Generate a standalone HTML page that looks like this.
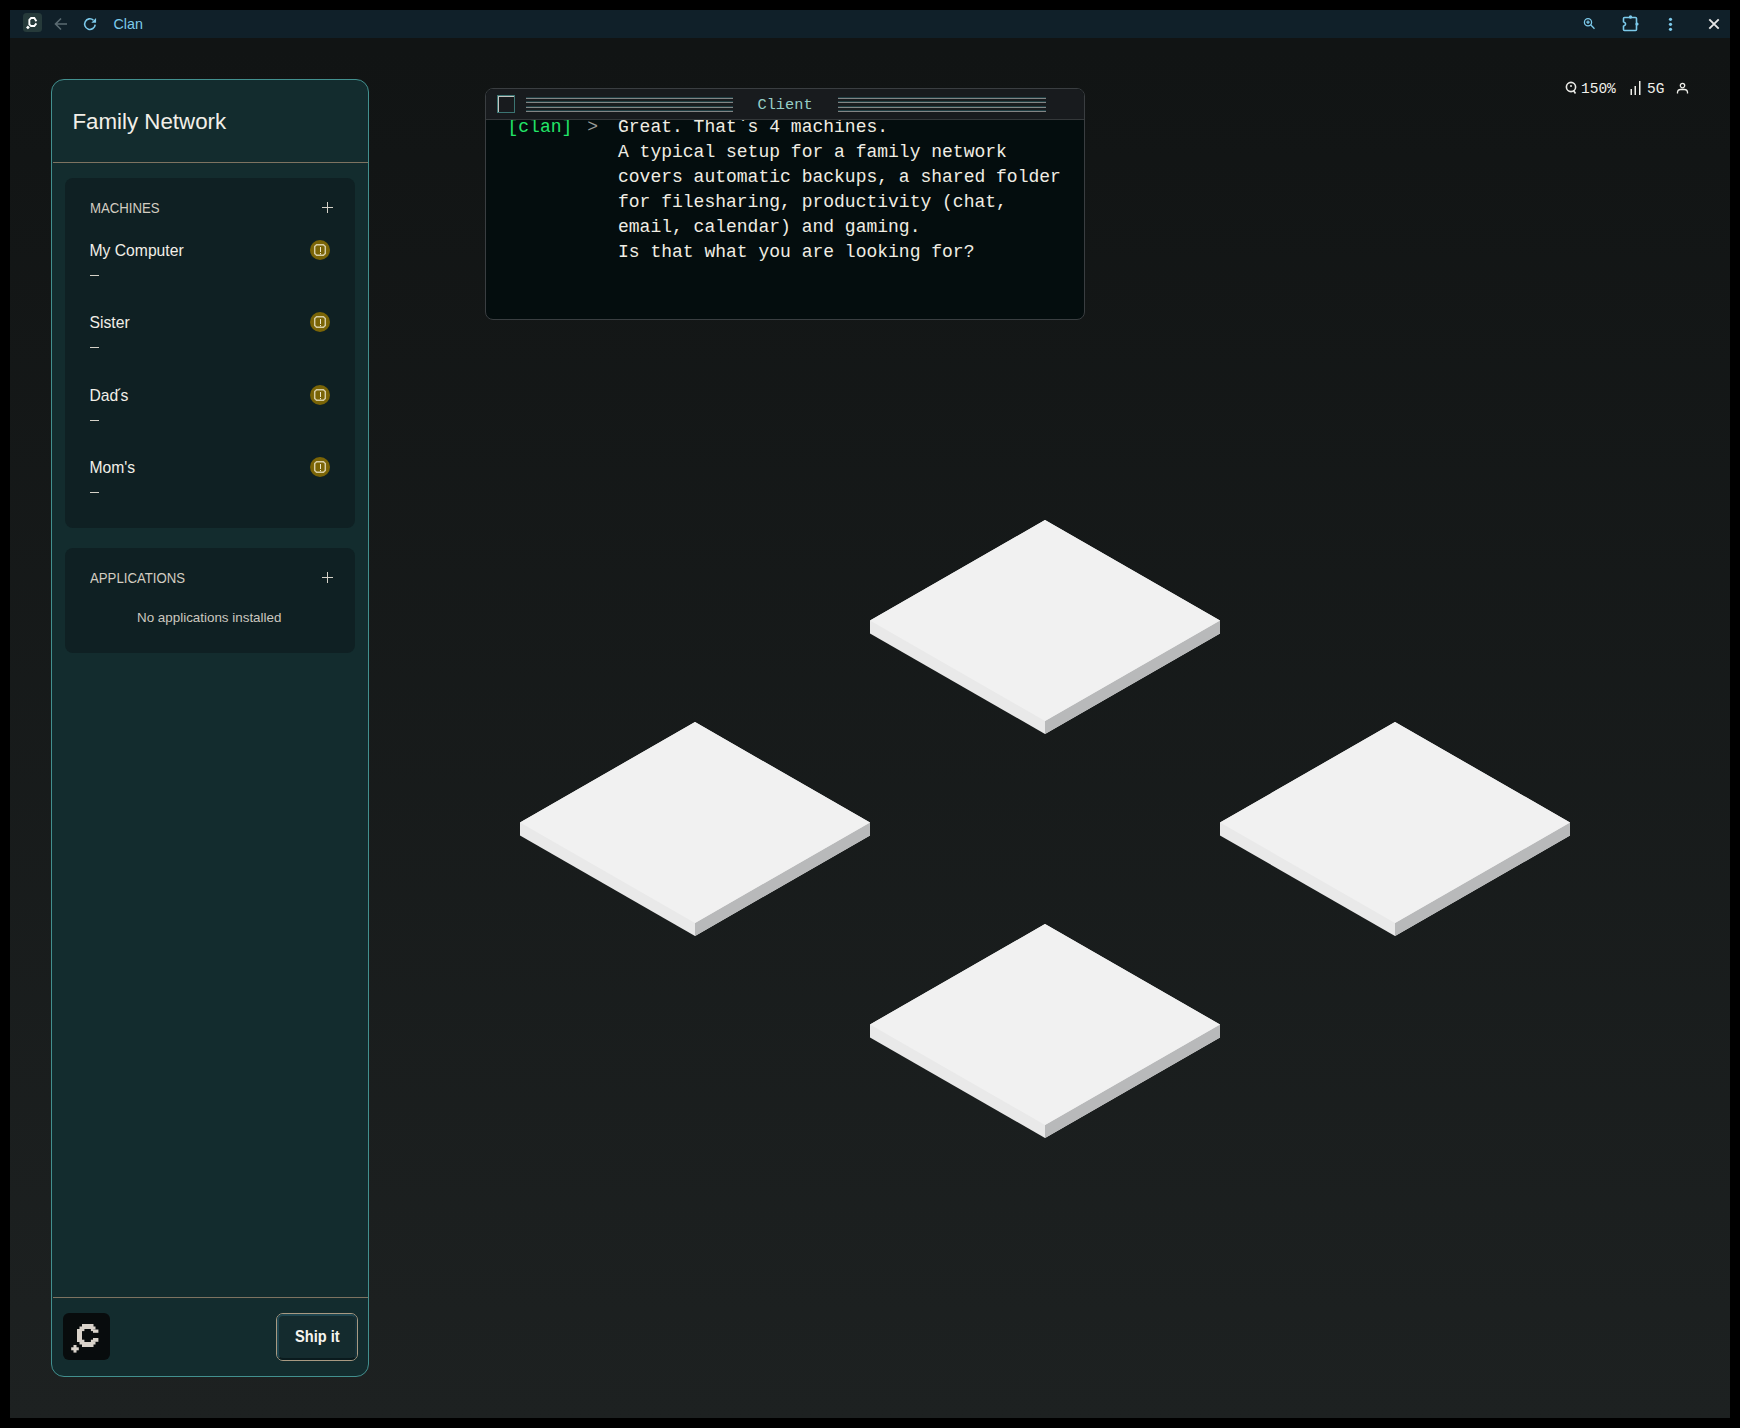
<!DOCTYPE html>
<html><head><meta charset="utf-8">
<style>
*{box-sizing:border-box;margin:0;padding:0}
html,body{width:1740px;height:1428px;overflow:hidden;background:#000;font-family:"Liberation Sans",sans-serif}
#win{position:absolute;left:10px;top:10px;width:1720px;height:1408px;background:linear-gradient(to bottom,#111414 0,#111414 40px,#1d2121 100%)}
#tb{position:absolute;left:10px;top:10px;width:1720px;height:28px;background:#102029}
.t{position:absolute;white-space:pre;line-height:1}
#sb{position:absolute;left:51px;top:79px;width:318px;height:1298px;border:1px solid #42908f;border-radius:13px;background:#132c2e}
.div{position:absolute;left:53px;width:315px;height:1px;background:#7d7361}
.card{position:absolute;left:65px;width:290px;background:#0f2023;border-radius:8px}
.hdr{font-size:14.5px;color:#d3cdc1;transform:scaleX(0.91);transform-origin:0 0}
.plus{position:absolute;width:11px;height:11px}
.plus:before{content:"";position:absolute;left:5px;top:0;width:1px;height:11px;background:#d6d2c8}
.plus:after{content:"";position:absolute;left:0;top:5px;width:11px;height:1px;background:#d6d2c8}
.mname{font-size:15.7px;color:#f2efe8}
.dash{position:absolute;left:90px;width:9px;height:1px;background:#d6d2c8}
.warn{position:absolute;left:310px;width:20px;height:20px}
#term{position:absolute;left:485px;top:88px;width:600px;height:232px;border:1px solid #3a3e41;border-radius:8px;background:#040d0e;overflow:hidden}
#thead{position:absolute;left:0;top:0;width:598px;height:31px;background:#181b1e;border-bottom:1px solid #34383a;z-index:2}
.tl{position:absolute;font-family:"Liberation Mono",monospace;font-size:18px;line-height:25px;color:#f0ede4;white-space:pre}
.stripes{position:absolute;top:97px;height:17px;background:repeating-linear-gradient(to bottom,#1f3d42 0,#1f3d42 1px,#828484 1px,#828484 2px,#181b1e 2px,#181b1e 4.33px)}
.tile{position:absolute;width:352px;height:216px}
</style></head><body>
<div id="win"></div>
<div id="tb"></div>
<!-- titlebar icons -->
<svg style="position:absolute;left:23px;top:13px" width="19" height="19" viewBox="0 0 19 19">
  <rect x="0" y="0" width="19" height="19" rx="3.5" fill="#263a3a"/>
  <path d="M13.4 8.2L11.3 5.05H8.1L6.35 6.8V11.3L8.1 13.05H11.3L13.4 10.3" stroke="#ffffff" stroke-width="1.9" fill="none"/>
  <path d="M4.9 12.6L6.8 14.5L4.9 16.3L3 14.5Z" fill="#ffffff"/>
</svg>
<svg style="position:absolute;left:54px;top:17px" width="14" height="14" viewBox="0 0 14 14">
  <path d="M13 7H2M7 1.5L1.5 7L7 12.5" stroke="#5b6b72" stroke-width="1.6" fill="none"/>
</svg>
<svg style="position:absolute;left:83px;top:17px" width="14" height="14" viewBox="0 0 14 14">
  <path d="M12.2 7.6A5.3 5.3 0 1 1 10.4 3.1" stroke="#7ccaeb" stroke-width="1.55" fill="none"/>
  <path d="M13.05 1.1V5.85H8.3Z" fill="#7ccaeb"/>
</svg>
<div class="t" style="left:113.5px;top:17px;font-size:14.3px;color:#7ccaeb;">Clan</div>
<svg style="position:absolute;left:1583px;top:17px" width="14" height="14" viewBox="0 0 14 14">
  <circle cx="5" cy="5.2" r="3.6" stroke="#7ccaeb" stroke-width="1.3" fill="none"/>
  <path d="M3.3 5.2H6.7M5 3.5V6.9" stroke="#7ccaeb" stroke-width="1.2"/>
  <path d="M7.6 7.8L11.5 11.8" stroke="#7ccaeb" stroke-width="1.3"/>
</svg>
<svg style="position:absolute;left:1621px;top:14px" width="20" height="19" viewBox="0 0 20 19">
  <path d="M3.5 3.5H14.5A1 1 0 0 1 15.5 4.5V15.5A1 1 0 0 1 14.5 16.5H3.5A1 1 0 0 1 2.5 15.5V12.3Q6.8 10 2.5 7.7V4.5A1 1 0 0 1 3.5 3.5Z" stroke="#7ccaeb" stroke-width="1.6" fill="none"/>
  <circle cx="9.5" cy="3" r="1.7" fill="#7ccaeb"/>
  <circle cx="16" cy="10" r="1.6" fill="#7ccaeb"/>
</svg>
<svg style="position:absolute;left:1666px;top:17px" width="10" height="16" viewBox="0 0 10 16">
  <circle cx="4.5" cy="2.3" r="1.6" fill="#7ccaeb"/><circle cx="4.5" cy="7.3" r="1.6" fill="#7ccaeb"/><circle cx="4.5" cy="12.3" r="1.6" fill="#7ccaeb"/>
</svg>
<svg style="position:absolute;left:1707px;top:17px" width="14" height="14" viewBox="0 0 14 14">
  <path d="M2.3 2.3L11.7 11.7M11.7 2.3L2.3 11.7" stroke="#e6e6e6" stroke-width="1.9"/>
</svg>

<!-- sidebar -->
<div id="sb"></div>
<div class="t" style="left:72.5px;top:111px;font-size:22.3px;color:#f2efe8">Family Network</div>
<div class="div" style="top:162px"></div>
<div class="card" style="top:178px;height:350px"></div>
<div class="t hdr" style="left:90px;top:201px">MACHINES</div>
<div class="plus" style="left:322px;top:202px"></div>

<div class="t mname" style="left:89.5px;top:243px">My Computer</div>
<div class="dash" style="top:275px"></div>
<div class="t mname" style="left:89.5px;top:315px">Sister</div>
<div class="dash" style="top:347px"></div>
<div class="t mname" style="left:89.5px;top:388px">Dad<span style="margin-left:-1.5px;margin-right:-1.5px">&#180;</span>s</div>
<div class="dash" style="top:420px"></div>
<div class="t mname" style="left:89.5px;top:460px">Mom's</div>
<div class="dash" style="top:492px"></div>

<svg class="warn" style="top:240px" width="20" height="20" viewBox="0 0 20 20"><circle cx="10" cy="10" r="10" fill="#7a6406"/><path d="M6.6 4.7H13.4L15.3 6.6V13.4L13.4 15.3H6.6L4.7 13.4V6.6Z" stroke="#d6cda6" stroke-width="1.45" fill="none"/><rect x="10" y="7" width="1" height="5" fill="#ece6cc"/><rect x="10" y="13" width="1" height="1.2" fill="#ece6cc"/></svg>
<svg class="warn" style="top:312px" width="20" height="20" viewBox="0 0 20 20"><circle cx="10" cy="10" r="10" fill="#7a6406"/><path d="M6.6 4.7H13.4L15.3 6.6V13.4L13.4 15.3H6.6L4.7 13.4V6.6Z" stroke="#d6cda6" stroke-width="1.45" fill="none"/><rect x="10" y="7" width="1" height="5" fill="#ece6cc"/><rect x="10" y="13" width="1" height="1.2" fill="#ece6cc"/></svg>
<svg class="warn" style="top:385px" width="20" height="20" viewBox="0 0 20 20"><circle cx="10" cy="10" r="10" fill="#7a6406"/><path d="M6.6 4.7H13.4L15.3 6.6V13.4L13.4 15.3H6.6L4.7 13.4V6.6Z" stroke="#d6cda6" stroke-width="1.45" fill="none"/><rect x="10" y="7" width="1" height="5" fill="#ece6cc"/><rect x="10" y="13" width="1" height="1.2" fill="#ece6cc"/></svg>
<svg class="warn" style="top:457px" width="20" height="20" viewBox="0 0 20 20"><circle cx="10" cy="10" r="10" fill="#7a6406"/><path d="M6.6 4.7H13.4L15.3 6.6V13.4L13.4 15.3H6.6L4.7 13.4V6.6Z" stroke="#d6cda6" stroke-width="1.45" fill="none"/><rect x="10" y="7" width="1" height="5" fill="#ece6cc"/><rect x="10" y="13" width="1" height="1.2" fill="#ece6cc"/></svg>
<div class="card" style="top:548px;height:105px"></div>
<div class="t hdr" style="left:90px;top:571px">APPLICATIONS</div>
<div class="plus" style="left:322px;top:572px"></div>
<div class="t" style="left:137px;top:611px;font-size:13.4px;color:#cbc7bf">No applications installed</div>

<div class="div" style="top:1297px"></div>
<svg style="position:absolute;left:63px;top:1313px" width="47" height="47" viewBox="0 0 47 47">
  <rect x="0" y="0" width="47" height="47" rx="6" fill="#080c0d"/>
  <g fill="#d9d3cb">
    <rect x="19" y="11" width="11.5" height="5"/>
    <rect x="16.5" y="13.5" width="3" height="3"/>
    <rect x="14" y="16" width="5" height="13"/>
    <rect x="16.5" y="28.5" width="3" height="3"/>
    <rect x="19" y="29" width="11.5" height="5"/>
    <rect x="30" y="13.5" width="2.5" height="3"/>
    <rect x="30" y="16.5" width="5.4" height="3.3"/>
    <rect x="30" y="25" width="5.4" height="3.8"/>
    <rect x="30" y="28.5" width="2.5" height="3"/>
    <rect x="8.2" y="34.3" width="7.6" height="3"/>
    <rect x="10.5" y="32" width="3" height="7.6"/>
    <rect x="19" y="15.5" width="2.4" height="2.6"/>
    <rect x="27.9" y="15.5" width="2.4" height="2.6"/>
    <rect x="19" y="26.7" width="2.4" height="2.6"/>
    <rect x="27.9" y="26.7" width="2.4" height="2.6"/>
  </g>
</svg>
<div style="position:absolute;left:276px;top:1313px;width:82px;height:48px;border:1px solid #a89a82;border-radius:7px;background:#142b2e"></div>
<div style="position:absolute;left:277px;top:1314px;width:80px;height:46px;border-radius:6px;border:2px solid #1f4650;border-right-color:#17323a;border-bottom-color:#0a1a1d;"></div>
<div class="t" style="left:294.5px;top:1328px;font-size:16.5px;font-weight:bold;color:#f7f4ee;transform:scaleX(0.885);transform-origin:0 0">Ship it</div>

<!-- terminal -->
<div id="term">
  <div id="thead"></div>
  <div class="tl" style="left:21.5px;top:26px;color:#22e668">[clan]</div>
  <div class="tl" style="left:101.3px;top:26px;color:#9a9a96">&gt;</div>
  <div class="tl" style="left:132px;top:26px">Great. That`s 4 machines.
A typical setup for a family network
covers automatic backups, a shared folder
for filesharing, productivity (chat,
email, calendar) and gaming.
Is that what you are looking for?</div>
</div>
<div style="position:absolute;left:497px;top:95px;width:18px;height:18px;border:1px solid #3b7472;z-index:3">
  <div style="position:absolute;left:0;top:0;width:16px;height:16px;border-top:1px solid #c4c4c0;border-left:1px solid #c4c4c0"></div>
</div>
<div class="stripes" style="left:526px;width:207px;z-index:3"></div>
<div class="stripes" style="left:838px;width:208px;z-index:3"></div>
<div class="t" style="left:757.5px;top:98px;font-family:'Liberation Mono',monospace;font-size:15.3px;color:#96cfc8;z-index:3">Client</div>

<!-- status -->
<svg style="position:absolute;left:1565px;top:81px" width="13" height="14" viewBox="0 0 13 14">
  <circle cx="6" cy="6" r="4.6" stroke="#e8e8e4" stroke-width="1.6" fill="none"/>
  <path d="M8.5 9.5L10.5 12.5" stroke="#e8e8e4" stroke-width="1.6"/>
  <circle cx="6" cy="5" r="1" fill="#e8e8e4"/>
</svg>
<div class="t" style="left:1581px;top:82px;font-family:'Liberation Mono',monospace;font-size:14.5px;color:#efefea">150%</div>
<svg style="position:absolute;left:1630px;top:80px" width="12" height="16" viewBox="0 0 12 16">
  <rect x="0.5" y="9" width="1.5" height="6" fill="#efefea"/>
  <rect x="4.5" y="6" width="1.5" height="9" fill="#efefea"/>
  <rect x="9" y="1" width="1.5" height="14" fill="#efefea"/>
</svg>
<div class="t" style="left:1647px;top:82px;font-family:'Liberation Mono',monospace;font-size:14.5px;color:#efefea">5G</div>
<svg style="position:absolute;left:1676px;top:82px" width="13" height="13" viewBox="0 0 13 13">
  <circle cx="6.5" cy="3.6" r="2.2" stroke="#efefea" stroke-width="1.3" fill="none"/>
  <path d="M1.5 11.5V10A3 3 0 0 1 4.5 7.5H8.5A3 3 0 0 1 11.5 10V11.5" stroke="#efefea" stroke-width="1.3" fill="none"/>
</svg>

<!-- tiles -->
<svg style="position:absolute;left:0;top:0" width="1740" height="1428" viewBox="0 0 1740 1428">
  <defs>
    <g id="tile">
      <path d="M0 -100L175 0.5V13.5L0 114L-175 13.5V0.5Z" fill="#e9e9e9"/>
      <path d="M175 0.5L0 101V114L175 13.5Z" fill="#b8b9ba"/>
      <path d="M0 -100L175 0.5L0 101L-175 0.5Z" fill="#f1f1f1"/>
    </g>
  </defs>
  <use href="#tile" x="1045" y="620"/>
  <use href="#tile" x="695" y="822"/>
  <use href="#tile" x="1395" y="822"/>
  <use href="#tile" x="1045" y="1024"/>
</svg>
</body></html>
